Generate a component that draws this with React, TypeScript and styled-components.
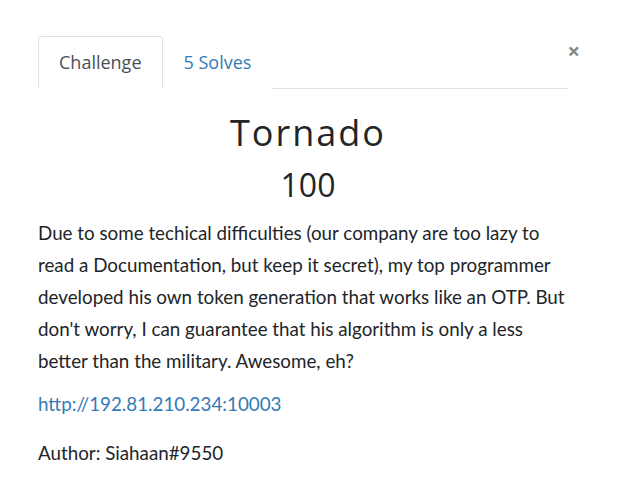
import React from 'react';
import styled, { createGlobalStyle } from 'styled-components';

const GlobalStyle = createGlobalStyle`
  html, body {
    margin: 0;
    padding: 0;
    background: #FFFFFF;
  }
`;

const Container = styled.div`
  width: 619px;
  min-height: 478px;
  box-sizing: border-box;
  padding: 36px 41px 0 38px;
  position: relative;
`;

const Close = styled.button`
  position: absolute;
  top: 39px;
  right: 39px;
  border: none;
  background: none;
  padding: 0;
  font-family: "Open Sans", sans-serif;
  font-size: 22px;
  font-weight: 700;
  line-height: 1;
  color: #888888;
  cursor: pointer;
`;

const Tabs = styled.div`
  display: flex;
  border-bottom: 1px solid #DEE2E6;
  width: 530px;
`;

const Tab = styled.div<{ active?: boolean }>`
  font-family: "Open Sans", sans-serif;
  font-size: 18px;
  line-height: 24px;
  padding: 13px 20px 14px;
  margin-bottom: -1px;
  border: 1px solid ${(p) => (p.active ? '#DEE2E6' : 'transparent')};
  border-bottom-color: ${(p) => (p.active ? '#FFFFFF' : 'transparent')};
  border-radius: 4px 4px 0 0;
  color: ${(p) => (p.active ? '#495057' : '#337AB7')};
  background: #FFFFFF;
`;

const Title = styled.h2`
  margin: 22px 0 0;
  text-align: center;
  font-family: "Open Sans", sans-serif;
  font-weight: 400;
  font-size: 36px;
  letter-spacing: 2px;
  line-height: 1.2;
  color: #212529;
`;

const Value = styled.h4`
  margin: 12px 0 0;
  text-align: center;
  font-family: "Open Sans", sans-serif;
  font-weight: 400;
  font-size: 32px;
  line-height: 1.2;
  color: #212529;
`;

const Body = styled.div`
  margin-top: 12px;
  width: 530px;
  font-family: Lato, sans-serif;
  font-size: 18.8px;
  line-height: 32px;
  color: #212529;
`;

const Paragraph = styled.p<{ gap?: number }>`
  margin: 0 0 ${(p) => p.gap ?? 16}px;
`;

const Link = styled.a`
  color: #337AB7;
  text-decoration: none;
`;

function App() {
  return (
    <Container>
      <GlobalStyle />
      <Close>×</Close>
      <Tabs>
        <Tab active>Challenge</Tab>
        <Tab>5 Solves</Tab>
      </Tabs>
      <Title>Tornado</Title>
      <Value>100</Value>
      <Body>
        <Paragraph gap={11}>
          Due to some techical difficulties (our company are too lazy to read a Documentation, but keep it secret),
          my top programmer developed his own token generation that works like an OTP. But don't worry, I can
          guarantee that his algorithm is only a less better than the military. Awesome, eh?
        </Paragraph>
        <Paragraph gap={17}>
          <Link href="#">http://192.81.210.234:10003</Link>
        </Paragraph>
        <Paragraph>Author: Siahaan#9550</Paragraph>
      </Body>
    </Container>
  );
}

export default App;
